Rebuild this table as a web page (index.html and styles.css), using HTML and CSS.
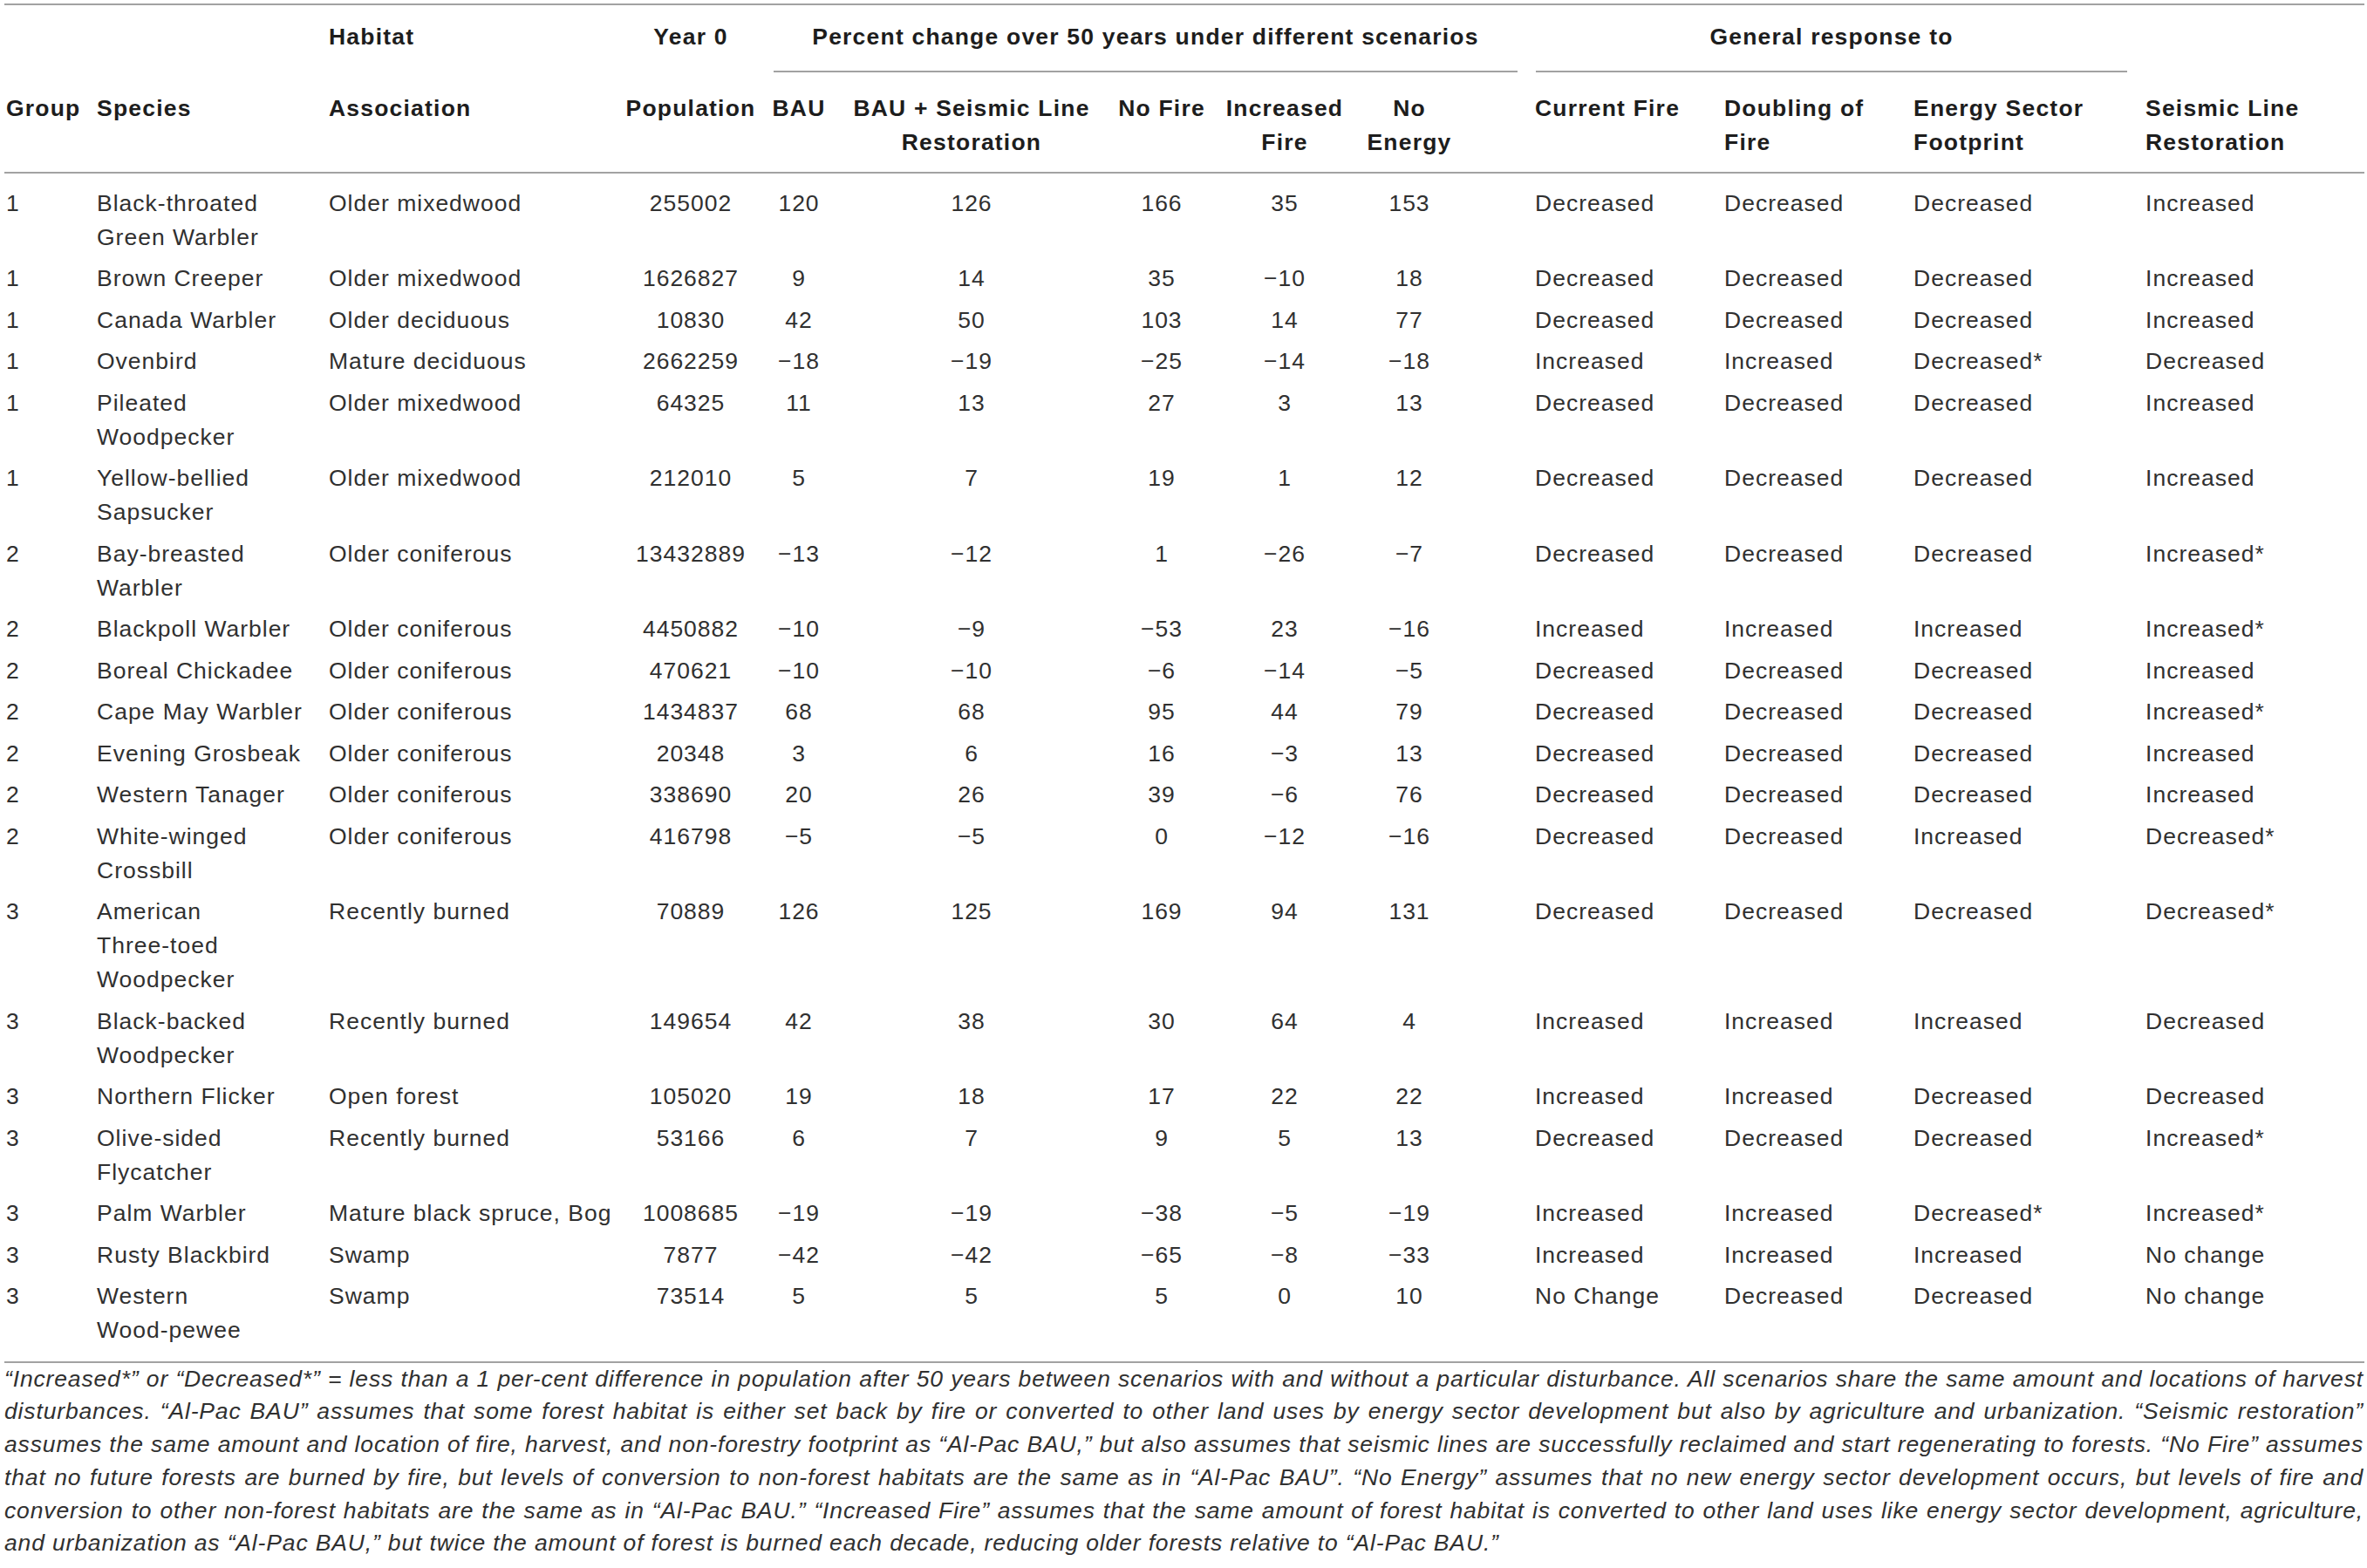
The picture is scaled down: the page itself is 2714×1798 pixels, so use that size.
FILE: index.html
```html
<!DOCTYPE html>
<html lang="en">
<head>
<meta charset="utf-8">
<title>Species response table</title>
<link rel="stylesheet" href="styles.css">
</head>
<body>
<div class="page">
<table class="grid">
  <colgroup>
    <col class="c1"><col class="c2"><col class="c3"><col class="c4"><col class="c5"><col class="c6"><col class="c7"><col class="c8"><col class="c9"><col class="c10"><col class="c11"><col class="c12"><col class="c13">
  </colgroup>
  <thead>
    <tr class="h1">
      <th class="lft"></th>
      <th class="lft"></th>
      <th class="lft">Habitat</th>
      <th class="ctr">Year 0</th>
      <th class="span pc" colspan="5"><div class="lbl">Percent change over 50 years under different scenarios</div></th>
      <th class="span gr" colspan="3"><div class="lbl">General response to</div></th>
      <th></th>
    </tr>
    <tr class="h2">
      <th>Group</th>
      <th>Species</th>
      <th>Association</th>
      <th>Population</th>
      <th>BAU</th>
      <th>BAU + Seismic Line<br>Restoration</th>
      <th>No Fire</th>
      <th>Increased<br>Fire</th>
      <th>No<br>Energy</th>
      <th>Current Fire</th>
      <th>Doubling of<br>Fire</th>
      <th>Energy Sector<br>Footprint</th>
      <th>Seismic Line<br>Restoration</th>
    </tr>
  </thead>
  <tbody>
    <tr><td>1</td><td>Black-throated<br>Green Warbler</td><td>Older mixedwood</td><td>255002</td><td>120</td><td>126</td><td>166</td><td>35</td><td>153</td><td>Decreased</td><td>Decreased</td><td>Decreased</td><td>Increased</td></tr>
    <tr><td>1</td><td>Brown Creeper</td><td>Older mixedwood</td><td>1626827</td><td>9</td><td>14</td><td>35</td><td>−10</td><td>18</td><td>Decreased</td><td>Decreased</td><td>Decreased</td><td>Increased</td></tr>
    <tr><td>1</td><td>Canada Warbler</td><td>Older deciduous</td><td>10830</td><td>42</td><td>50</td><td>103</td><td>14</td><td>77</td><td>Decreased</td><td>Decreased</td><td>Decreased</td><td>Increased</td></tr>
    <tr><td>1</td><td>Ovenbird</td><td>Mature deciduous</td><td>2662259</td><td>−18</td><td>−19</td><td>−25</td><td>−14</td><td>−18</td><td>Increased</td><td>Increased</td><td>Decreased*</td><td>Decreased</td></tr>
    <tr><td>1</td><td>Pileated<br>Woodpecker</td><td>Older mixedwood</td><td>64325</td><td>11</td><td>13</td><td>27</td><td>3</td><td>13</td><td>Decreased</td><td>Decreased</td><td>Decreased</td><td>Increased</td></tr>
    <tr><td>1</td><td>Yellow-bellied<br>Sapsucker</td><td>Older mixedwood</td><td>212010</td><td>5</td><td>7</td><td>19</td><td>1</td><td>12</td><td>Decreased</td><td>Decreased</td><td>Decreased</td><td>Increased</td></tr>
    <tr><td>2</td><td>Bay-breasted<br>Warbler</td><td>Older coniferous</td><td>13432889</td><td>−13</td><td>−12</td><td>1</td><td>−26</td><td>−7</td><td>Decreased</td><td>Decreased</td><td>Decreased</td><td>Increased*</td></tr>
    <tr><td>2</td><td>Blackpoll Warbler</td><td>Older coniferous</td><td>4450882</td><td>−10</td><td>−9</td><td>−53</td><td>23</td><td>−16</td><td>Increased</td><td>Increased</td><td>Increased</td><td>Increased*</td></tr>
    <tr><td>2</td><td>Boreal Chickadee</td><td>Older coniferous</td><td>470621</td><td>−10</td><td>−10</td><td>−6</td><td>−14</td><td>−5</td><td>Decreased</td><td>Decreased</td><td>Decreased</td><td>Increased</td></tr>
    <tr><td>2</td><td>Cape May Warbler</td><td>Older coniferous</td><td>1434837</td><td>68</td><td>68</td><td>95</td><td>44</td><td>79</td><td>Decreased</td><td>Decreased</td><td>Decreased</td><td>Increased*</td></tr>
    <tr><td>2</td><td>Evening Grosbeak</td><td>Older coniferous</td><td>20348</td><td>3</td><td>6</td><td>16</td><td>−3</td><td>13</td><td>Decreased</td><td>Decreased</td><td>Decreased</td><td>Increased</td></tr>
    <tr><td>2</td><td>Western Tanager</td><td>Older coniferous</td><td>338690</td><td>20</td><td>26</td><td>39</td><td>−6</td><td>76</td><td>Decreased</td><td>Decreased</td><td>Decreased</td><td>Increased</td></tr>
    <tr><td>2</td><td>White-winged<br>Crossbill</td><td>Older coniferous</td><td>416798</td><td>−5</td><td>−5</td><td>0</td><td>−12</td><td>−16</td><td>Decreased</td><td>Decreased</td><td>Increased</td><td>Decreased*</td></tr>
    <tr><td>3</td><td>American<br>Three-toed<br>Woodpecker</td><td>Recently burned</td><td>70889</td><td>126</td><td>125</td><td>169</td><td>94</td><td>131</td><td>Decreased</td><td>Decreased</td><td>Decreased</td><td>Decreased*</td></tr>
    <tr><td>3</td><td>Black-backed<br>Woodpecker</td><td>Recently burned</td><td>149654</td><td>42</td><td>38</td><td>30</td><td>64</td><td>4</td><td>Increased</td><td>Increased</td><td>Increased</td><td>Decreased</td></tr>
    <tr><td>3</td><td>Northern Flicker</td><td>Open forest</td><td>105020</td><td>19</td><td>18</td><td>17</td><td>22</td><td>22</td><td>Increased</td><td>Increased</td><td>Decreased</td><td>Decreased</td></tr>
    <tr><td>3</td><td>Olive-sided<br>Flycatcher</td><td>Recently burned</td><td>53166</td><td>6</td><td>7</td><td>9</td><td>5</td><td>13</td><td>Decreased</td><td>Decreased</td><td>Decreased</td><td>Increased*</td></tr>
    <tr><td>3</td><td>Palm Warbler</td><td>Mature black spruce, Bog</td><td>1008685</td><td>−19</td><td>−19</td><td>−38</td><td>−5</td><td>−19</td><td>Increased</td><td>Increased</td><td>Decreased*</td><td>Increased*</td></tr>
    <tr><td>3</td><td>Rusty Blackbird</td><td>Swamp</td><td>7877</td><td>−42</td><td>−42</td><td>−65</td><td>−8</td><td>−33</td><td>Increased</td><td>Increased</td><td>Increased</td><td>No change</td></tr>
    <tr><td>3</td><td>Western<br>Wood-pewee</td><td>Swamp</td><td>73514</td><td>5</td><td>5</td><td>5</td><td>0</td><td>10</td><td>No Change</td><td>Decreased</td><td>Decreased</td><td>No change</td></tr>
  </tbody>
</table>
<p class="note">
  <span class="ln">“Increased*” or “Decreased*” = less than a 1 per-cent difference in population after 50 years between scenarios with and without a particular disturbance. All scenarios share the same amount and locations of harvest</span>
  <span class="ln">disturbances. “Al-Pac BAU” assumes that some forest habitat is either set back by fire or converted to other land uses by energy sector development but also by agriculture and urbanization. “Seismic restoration”</span>
  <span class="ln">assumes the same amount and location of fire, harvest, and non-forestry footprint as “Al-Pac BAU,” but also assumes that seismic lines are successfully reclaimed and start regenerating to forests. “No Fire” assumes</span>
  <span class="ln">that no future forests are burned by fire, but levels of conversion to non-forest habitats are the same as in “Al-Pac BAU”. “No Energy” assumes that no new energy sector development occurs, but levels of fire and</span>
  <span class="ln">conversion to other non-forest habitats are the same as in “Al-Pac BAU.” “Increased Fire” assumes that the same amount of forest habitat is converted to other land uses like energy sector development, agriculture,</span>
  <span class="ln end">and urbanization as “Al-Pac BAU,” but twice the amount of forest is burned each decade, reducing older forests relative to “Al-Pac BAU.”</span>
</p>
</div>
</body>
</html>
```

FILE: styles.css
```css
html, body {
  margin: 0;
  padding: 0;
  background: #ffffff;
}

body {
  font-family: "Liberation Sans", Arial, Helvetica, sans-serif;
  color: #303030;
}

.page {
  padding: 4px 3px 0 5px;
}

/* ---------- table ---------- */
.grid {
  border-collapse: separate;
  border-spacing: 0;
  table-layout: fixed;
  width: 2706px;
  font-size: 26.5px;
  line-height: 39px;
  letter-spacing: 1px;
}

.c1 { width: 104px; }
.c2 { width: 266px; }
.c3 { width: 337px; }
.c4 { width: 160px; }
.c5 { width: 88px; }
.c6 { width: 308px; }
.c7 { width: 128px; }
.c8 { width: 154px; }
.c9 { width: 202px; }
.c10 { width: 217px; }
.c11 { width: 217px; }
.c12 { width: 266px; }
.c13 { width: 259px; }

.grid th,
.grid td {
  padding: 0;
  vertical-align: top;
  text-align: left;
  white-space: normal;
}

.grid th {
  font-weight: bold;
  letter-spacing: 1.2px;
  color: #1d1d1d;
}

/* header row 1 */
.h1 th {
  border-top: 2px solid #a2a2a2;
  padding-top: 17px;
  padding-bottom: 21px;
}

.h1 th.lft { padding-left: 2px; }
.h1 th.ctr { text-align: center; }

.h1 th.span { padding-bottom: 0; }

.span .lbl {
  text-align: center;
  padding-bottom: 19px;
  border-bottom: 2px solid #a2a2a2;
}

.pc .lbl { margin: 0 12px 0 15px; }
.gr .lbl { margin: 0 13px 0 9px; }

/* header row 2 */
.h2 th {
  padding-top: 21.5px;
  padding-bottom: 14.5px;
  border-bottom: 2px solid #a2a2a2;
}

/* body rows */
.grid tbody td {
  padding-top: 4.25px;
  padding-bottom: 4.25px;
}

.grid tbody tr:first-child td { padding-top: 14.75px; }

.grid tbody tr:last-child td {
  padding-bottom: 15.5px;
  border-bottom: 2px solid #a2a2a2;
}

/* column alignment shared by header row 2 and body rows */
.h2 th:nth-child(-n+3),
.grid tbody td:nth-child(-n+3) {
  padding-left: 2px;
}

.h2 th:nth-child(2),
.grid tbody td:nth-child(2) {
  padding-right: 15px;
}

.h2 th:nth-child(3),
.grid tbody td:nth-child(3) {
  padding-right: 4px;
}

.h2 th:nth-child(n+4):nth-child(-n+9),
.grid tbody td:nth-child(n+4):nth-child(-n+9) {
  text-align: center;
}

.h2 th:nth-child(9),
.grid tbody td:nth-child(9) {
  padding-right: 70px;
}

.h2 th:nth-child(n+10),
.grid tbody td:nth-child(n+10) {
  padding-left: 8px;
}

/* ---------- footnote ---------- */
.note {
  width: 2705px;
  margin: 0;
  font-style: italic;
  font-size: 26.5px;
  line-height: 37.7px;
  letter-spacing: 0.85px;
  color: #303030;
}

.note .ln {
  display: block;
  text-align: justify;
  text-align-last: justify;
}

.note .ln.end {
  text-align-last: left;
}
```
